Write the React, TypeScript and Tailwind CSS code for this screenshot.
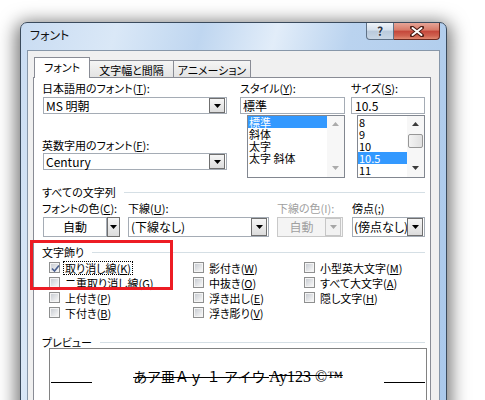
const serif = "font-['Liberation_Serif','Noto_Sans_CJK_JP',serif] [font-feature-settings:normal]";

function Key({ k }: { k: string }) {
  return (
    <>
      (<span className="underline">{k}</span>)
    </>
  );
}

function Tri({ color = "#000", up = false }: { color?: string; up?: boolean }) {
  return (
    <svg width="7" height="4" viewBox="0 0 7 4">
      <path d={up ? "M0 4h7L3.5 0z" : "M0 0h7L3.5 4z"} fill={color} />
    </svg>
  );
}

function DropBtn({ className = "", disabled = false }: { className?: string; disabled?: boolean }) {
  return (
    <div
      className={`flex shrink-0 items-center justify-center border ${
        disabled
          ? "border-[#c6c6c6] bg-[#f2f2f2]"
          : "border-[#6f6f6f] bg-[linear-gradient(#f6f6f6,#dcdcdc)]"
      } ${className}`}
    >
      <Tri color={disabled ? "#a6a6a6" : "#000"} />
    </div>
  );
}

function Label({ children, className = "" }: { children: React.ReactNode; className?: string }) {
  return <div className={`h-[12px] whitespace-nowrap text-[11px] leading-[12px] ${className}`}>{children}</div>;
}

function Heading({ children, className = "" }: { children: React.ReactNode; className?: string }) {
  return (
    <div className={`flex h-[12px] items-center gap-[8px] ${className}`}>
      <span className="whitespace-nowrap text-[11px] leading-[12px]">{children}</span>
      <div className="h-px flex-1 bg-[#d5dfe5]" />
    </div>
  );
}

function ListBox({
  items,
  selected,
  thumb,
  arrow,
}: {
  items: string[];
  selected: number;
  thumb?: boolean;
  arrow: string;
}) {
  return (
    <div className="flex h-[63px] border border-[#828790] bg-white">
      <div className="flex-1 overflow-hidden">
        {items.map((it, i) => (
          <div
            key={it}
            className={`h-[12px] whitespace-nowrap pl-[1px] text-[11px] leading-[12px] ${
              i === selected ? "bg-[#3399ff] text-white" : ""
            }`}
          >
            {it}
          </div>
        ))}
      </div>
      <div className="flex w-[17px] flex-col items-center bg-[#f7f7f7] pb-[7px] pt-[6px]">
        <Tri color={arrow} up />
        {thumb && (
          <div className="mt-[8px] h-[14px] w-[15px] rounded-[2px] border border-[#979797] bg-[linear-gradient(90deg,#f3f3f3,#e0e0e0)]" />
        )}
        <div className="flex-1" />
        <Tri color={arrow} />
      </div>
    </div>
  );
}

function Check({ label, checked = false, focus = false }: { label: React.ReactNode; checked?: boolean; focus?: boolean }) {
  return (
    <div className="flex h-[15px] items-center gap-[3px]">
      <div className="relative h-[11px] w-[11px] shrink-0 border border-[#8e8f8f] bg-[#f4f4f4] p-[1px]">
        <div className="h-full w-full bg-[linear-gradient(135deg,#c9cdd3,#f7f7f7)]" />
        {checked && (
          <svg className="absolute left-[1px] top-[1px]" width="9" height="9" viewBox="0 0 9 9">
            <path d="M1 4.5L3.5 7L8 1.5" stroke="#4a6090" strokeWidth="1.6" fill="none" />
          </svg>
        )}
      </div>
      <span
        className={`whitespace-nowrap border px-[1px] text-[11px] leading-[12px] ${
          focus ? "border-dotted border-black" : "border-transparent"
        }`}
      >
        {label}
      </span>
    </div>
  );
}

export default function App() {
  return (
    <div className="relative h-[400px] w-[485px] overflow-hidden bg-white pl-[20px] pt-[22px] font-['Noto_Sans_CJK_JP',sans-serif] text-black [font-feature-settings:'palt']">
      <div className="h-[420px] w-[427px] rounded-t-[7px] border border-[#3a4a5c] bg-[linear-gradient(105deg,#c9dcf2_0%,#dae8f7_18%,#bfd6f0_34%,#e2edf9_48%,#bad3ef_62%,#a9c8eb_100%)] px-[6px] shadow-[0_4px_18px_4px_rgba(0,0,0,0.55)]">
        <div className="flex h-[27px] justify-between">
          <span className="mt-[5px] pl-[3px] text-[12px] leading-[14px] text-[#111]">フォント</span>
          <div className="flex h-[17px]">
            <div className="flex w-[28px] items-center justify-center rounded-bl-[4px] border border-t-0 border-[#5f7186] bg-[linear-gradient(#eef3f8,#d5e0ec_45%,#b9c9db_50%,#c9d7e6)] text-[12px] font-bold leading-[12px] text-[#2b3545] [text-shadow:0_0_2px_#fff]">
              ?
            </div>
            <div className="flex w-[46px] items-center justify-center rounded-br-[4px] border border-l-0 border-t-0 border-[#6b2a20] bg-[linear-gradient(#e6a597,#d77a68_45%,#c5463a_50%,#d0624f_80%,#e18a72)]">
              <svg width="14" height="11" viewBox="0 0 14 11">
                <path d="M2 1.5L12 9.5M12 1.5L2 9.5" stroke="#4a1c14" strokeWidth="4" strokeLinecap="round" />
                <path d="M2.5 2L11.5 9M11.5 2L2.5 9" stroke="#fff" strokeWidth="2" strokeLinecap="round" />
              </svg>
            </div>
          </div>
        </div>

        <div className="h-[400px] border border-[#8797a9] bg-[#f0f0f0] pl-[5px] pt-[6px]">
          <div className="flex h-[20px] items-end pl-[1px]">
            <div className="relative z-10 -mb-px flex h-[21px] w-[56px] items-center justify-center border border-b-0 border-[#898c95] bg-white pb-[2px] text-[11px] leading-[12px]">
              フォント
            </div>
            <div className="flex h-[17px] w-[84px] items-center justify-center border border-b-0 border-l-0 border-[#898c95] bg-[linear-gradient(#f5f5f5,#e3e3e3)] pt-[1px] text-[11px] leading-[12px]">
              文字幅と間隔
            </div>
            <div className="flex h-[17px] w-[77px] items-center justify-center whitespace-nowrap border border-b-0 border-l-0 border-[#898c95] bg-[linear-gradient(#f5f5f5,#e3e3e3)] pt-[1px] text-[11px] leading-[12px]">
              アニメーション
            </div>
          </div>

          <div className="h-[400px] w-[398px] border border-[#898c95] bg-white pl-[8px] pr-[5px]">
            <div className="flex">
              <div className="w-[185px] pt-[4px]">
                <Label>
                  日本語用のフォント<Key k="T" />:
                </Label>
                <div className="ml-[1px] mt-[3px] flex h-[17px] items-center border border-[#a5acb5] bg-white">
                  <span className="flex-1 pl-[2px] text-[12px] leading-[14px]">MS 明朝</span>
                  <DropBtn className="mr-[1px] h-[15px] w-[16px]" />
                </div>
                <Label className="mt-[25px]">
                  英数字用のフォント<Key k="F" />:
                </Label>
                <div className="ml-[1px] mt-[2px] flex h-[17px] items-center border border-[#a5acb5] bg-white">
                  <span className="flex-1 pl-[2px] text-[12px] leading-[14px]">Century</span>
                  <DropBtn className="mr-[1px] h-[15px] w-[16px]" />
                </div>
              </div>

              <div className="ml-[13px] w-[105px] pt-[4px]">
                <Label>
                  スタイル<Key k="Y" />:
                </Label>
                <div className="mt-[3px] flex h-[17px] items-center border border-[#a5acb5] bg-white pl-[2px] text-[12px] leading-[14px]">
                  標準
                </div>
                <div className="ml-[7px] mt-[1px]">
                  <ListBox items={["標準", "斜体", "太字", "太字 斜体"]} selected={0} arrow="#ababab" />
                </div>
              </div>

              <div className="ml-[6px] w-[74px] pt-[4px]">
                <Label>
                  サイズ<Key k="S" />:
                </Label>
                <div className="mt-[3px] flex h-[17px] items-center border border-[#a5acb5] bg-white pl-[3px] text-[12px] leading-[14px]">
                  10.5
                </div>
                <div className="ml-[6px] mt-[1px]">
                  <ListBox items={["8", "9", "10", "10.5", "11"]} selected={3} thumb arrow="#3c3c3c" />
                </div>
              </div>
            </div>

            <Heading className="mt-[8px]">すべての文字列</Heading>

            <div className="mt-[4px] flex">
              <Label className="w-[86px]">
                フォントの色<Key k="C" />:
              </Label>
              <Label className="w-[149px]">
                下線<Key k="U" />:
              </Label>
              <Label className="w-[75px] text-[#a0a0a0]">下線の色(I):</Label>
              <Label>
                傍点<Key k=";" />
              </Label>
            </div>

            <div className="mt-[3px] flex h-[20px] pl-[1px]">
              <div className="flex w-[77px]">
                <div className="flex flex-1 items-center justify-center border border-[#a5acb5] bg-white text-[12px] leading-[14px]">
                  自動
                </div>
                <DropBtn className="w-[13px]" />
              </div>
              <div className="ml-[8px] flex w-[141px] items-center border border-[#a5acb5] bg-white">
                <span className="flex-1 pl-[2px] text-[12px] leading-[14px]">(下線なし)</span>
                <DropBtn className="mr-[1px] h-[18px] w-[16px]" />
              </div>
              <div className="ml-[8px] flex w-[66px] items-center border border-[#c9c9c9] bg-[#f4f4f4]">
                <span className="flex-1 text-center text-[12px] leading-[14px] text-[#a0a0a0]">自動</span>
                <DropBtn disabled className="mr-[1px] h-[18px] w-[16px]" />
              </div>
              <div className="ml-[9px] flex w-[73px] items-center border border-[#a5acb5] bg-white">
                <span className="min-w-0 flex-1 whitespace-nowrap pl-px text-[12px] leading-[14px]">(傍点なし)</span>
                <DropBtn className="mr-[1px] h-[18px] w-[16px]" />
              </div>
            </div>

            <Heading className="mt-[9px]">文字飾り</Heading>

            <div className="mt-[2px] flex pl-[7px]">
              <div className="w-[144px]">
                <Check checked focus label={<>取り消し線<Key k="K" /></>} />
                <Check label={<>二重取り消し線<Key k="G" /></>} />
                <Check label={<>上付き<Key k="P" /></>} />
                <Check label={<>下付き<Key k="B" /></>} />
              </div>
              <div className="w-[111px]">
                <Check label={<>影付き<Key k="W" /></>} />
                <Check label={<>中抜き<Key k="O" /></>} />
                <Check label={<>浮き出し<Key k="E" /></>} />
                <Check label={<>浮き彫り<Key k="V" /></>} />
              </div>
              <div>
                <Check label={<>小型英大文字<Key k="M" /></>} />
                <Check label={<>すべて大文字<Key k="A" /></>} />
                <Check label={<>隠し文字<Key k="H" /></>} />
              </div>
            </div>

            <Heading className="mt-[16px]">プレビュー</Heading>

            <div className="ml-[7px] h-[60px] w-[378px] border border-[#828282] pt-[21px]">
              <div className="flex h-[16px] items-end">
                <div className="mb-[3px] ml-px h-px w-[41px] bg-black" />
                <span className={`flex-1 whitespace-nowrap text-center text-[14px] leading-[16px] line-through ${serif}`}>
                  あア亜Ａｙ １ アイウ <span className="text-[16px]">Ay123 ©™</span>
                </span>
                <div className="mb-[3px] mr-px h-px w-[41px] bg-black" />
              </div>
            </div>
          </div>
        </div>
      </div>

      <div className="absolute left-[30px] top-[240px] h-[50px] w-[143px] border-[3px] border-[#ed1c24]" />
    </div>
  );
}
